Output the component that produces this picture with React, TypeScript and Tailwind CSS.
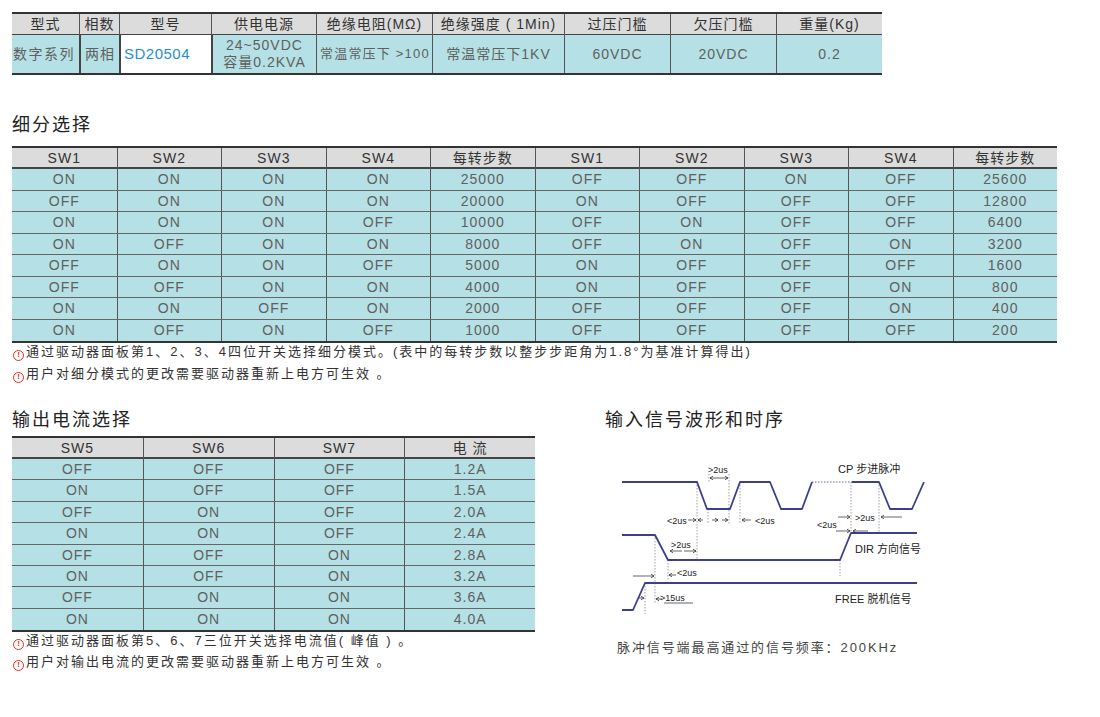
import React from 'react';

const font = { fontFamily: '"Liberation Sans", "Noto Sans CJK SC", sans-serif' };

const stepRows = [
  ['ON', 'ON', 'ON', 'ON', '25000', 'OFF', 'OFF', 'ON', 'OFF', '25600'],
  ['OFF', 'ON', 'ON', 'ON', '20000', 'ON', 'OFF', 'OFF', 'OFF', '12800'],
  ['ON', 'ON', 'ON', 'OFF', '10000', 'OFF', 'ON', 'OFF', 'OFF', '6400'],
  ['ON', 'OFF', 'ON', 'ON', '8000', 'OFF', 'ON', 'OFF', 'ON', '3200'],
  ['OFF', 'ON', 'ON', 'OFF', '5000', 'ON', 'OFF', 'OFF', 'OFF', '1600'],
  ['OFF', 'OFF', 'ON', 'ON', '4000', 'ON', 'OFF', 'OFF', 'ON', '800'],
  ['ON', 'ON', 'OFF', 'ON', '2000', 'OFF', 'OFF', 'OFF', 'ON', '400'],
  ['ON', 'OFF', 'ON', 'OFF', '1000', 'OFF', 'OFF', 'OFF', 'OFF', '200'],
];

const currentRows = [
  ['OFF', 'OFF', 'OFF', '1.2A'],
  ['ON', 'OFF', 'OFF', '1.5A'],
  ['OFF', 'ON', 'OFF', '2.0A'],
  ['ON', 'ON', 'OFF', '2.4A'],
  ['OFF', 'OFF', 'ON', '2.8A'],
  ['ON', 'OFF', 'ON', '3.2A'],
  ['OFF', 'ON', 'ON', '3.6A'],
  ['ON', 'ON', 'ON', '4.0A'],
];

const Warn = () => (
  <span className="inline-flex items-center justify-center w-[11px] h-[11px] rounded-full border border-[#e0301e] text-[#e0301e] text-[8px] font-bold leading-none mr-[2px] align-[-1px] tracking-normal">
    !
  </span>
);

const Note = ({ children }: { children: React.ReactNode }) => (
  <p className="text-[13px] text-[#333] tracking-[2px] pl-[1px]">
    <Warn />
    {children}
  </p>
);

const Title = ({ children }: { children: React.ReactNode }) => (
  <h2 className="text-[18px] leading-[24px] tracking-[2px] text-[#222]">{children}</h2>
);

const SwitchTable = ({
  grid,
  head,
  rows,
  rowH,
}: {
  grid: string;
  head: string[];
  rows: string[][];
  rowH: string;
}) => (
  <div className="border-t-2 border-b-2 border-[#333]">
    <div className={`grid ${grid} h-[21px] bg-[#dcdcdc] border-b-2 border-[#444]`}>
      {head.map((h, i) => (
        <div
          key={i}
          className={`flex items-center justify-center text-[14px] tracking-[1px] text-[#333] ${i > 0 ? 'border-l border-[#555]' : ''}`}
        >
          {h}
        </div>
      ))}
    </div>
    {rows.map((r, ri) => (
      <div
        key={ri}
        className={`grid ${grid} ${rowH} bg-[#b5e0e5] ${ri < rows.length - 1 ? 'border-b border-[#666]' : ''}`}
      >
        {r.map((c, i) => (
          <div
            key={i}
            className={`flex items-center justify-center text-[14px] tracking-[1px] text-[#606060] ${i > 0 ? 'border-l border-[#555]' : ''}`}
          >
            {c}
          </div>
        ))}
      </div>
    ))}
  </div>
);

const Arrow = ({ x1, x2, y }: { x1: number; x2: number; y: number }) => {
  const d = x2 > x1 ? -1 : 1;
  return (
    <g stroke="#222" strokeWidth="0.7" fill="none">
      <line x1={x1} y1={y} x2={x2} y2={y} />
      <path d={`M${x2 + d * 3},${y - 1.8} L${x2},${y} L${x2 + d * 3},${y + 1.8}`} />
    </g>
  );
};

const Timing = () => (
  <svg width="330" height="170" viewBox="600 450 330 170" className="block">
    {/* dotted guides */}
    <g stroke="#888" strokeWidth="0.8" strokeDasharray="1.5 1.5" fill="none">
      <line x1="697" y1="482" x2="697" y2="560" />
      <line x1="708" y1="509" x2="708" y2="524" />
      <line x1="709" y1="474" x2="709" y2="482" />
      <line x1="729" y1="474" x2="729" y2="524" />
      <line x1="740" y1="482" x2="740" y2="524" />
      <line x1="655" y1="535" x2="655" y2="604" />
      <line x1="668" y1="560" x2="668" y2="580" />
      <line x1="645" y1="583" x2="645" y2="614" />
      <line x1="840" y1="560" x2="840" y2="576" />
      <line x1="851" y1="482" x2="851" y2="533" />
      <line x1="879" y1="482" x2="879" y2="533" />
      <line x1="812" y1="482" x2="852" y2="482" stroke="#3b3f8c" />
    </g>
    {/* signals */}
    <g stroke="#3b3f8c" strokeWidth="1.8" fill="none" strokeLinejoin="round">
      <path d="M622,482 H697 L707,509 H730 L740,482 H770 L781,509 H802 L812,482" />
      <path d="M852,482 H879 L890,509 H912 L924,482" />
      <path d="M622,535 H655 L668,560 H840 L851,533 H917" />
      <path d="M622,610 H633 L645,583 H917" />
    </g>
    {/* labels */}
    <g fontFamily='"Liberation Sans", "Noto Sans CJK SC", sans-serif' fill="#222">
      <text x="838" y="473" fontSize="11">CP 步进脉冲</text>
      <text x="855" y="553" fontSize="11">DIR 方向信号</text>
      <text x="835" y="603" fontSize="11">FREE 脱机信号</text>
      <g fontSize="9">
        <text x="708" y="473">&gt;2us</text>
        <text x="667" y="524">&lt;2us</text>
        <text x="755" y="524">&lt;2us</text>
        <text x="855" y="521">&gt;2us</text>
        <text x="817" y="528">&lt;2us</text>
        <text x="671" y="548">&gt;2us</text>
        <text x="677" y="576">&lt;2us</text>
        <text x="660" y="601">&gt;15us</text>
      </g>
    </g>
    <Arrow x1={719} x2={710} y={478} />
    <Arrow x1={719} x2={728} y={478} />
    <Arrow x1={688} x2={696} y={520} />
    <Arrow x1={703} x2={698} y={520} />
    <Arrow x1={712} x2={718} y={520} />
    <Arrow x1={722} x2={728} y={520} />
    <Arrow x1={751} x2={742} y={520} />
    <Arrow x1={838} x2={850} y={517} />
    <Arrow x1={902} x2={881} y={517} />
    <Arrow x1={836} x2={850} y={531} />
    <Arrow x1={868} x2={853} y={531} />
    <Arrow x1={682} x2={670} y={551} />
    <Arrow x1={684} x2={696} y={551} />
    <Arrow x1={676} x2={669} y={575} />
    <Arrow x1={633} x2={654} y={576} />
    <Arrow x1={639} x2={644} y={598} />
    <Arrow x1={662} x2={656} y={599} />
    <line x1="664" y1="603" x2="693" y2="603" stroke="#222" strokeWidth="0.7" />
  </svg>
);

export default function App() {
  return (
    <div className="min-h-screen w-[1100px] bg-white pl-[12px] pt-[12px]" style={font}>
      {/* product spec */}
      <div className="w-[870px] border-t-2 border-b-2 border-[#333]">
        <div className="grid grid-cols-[67px_40px_92px_105px_116px_132px_106px_106px_106px] h-[21px] bg-[#dcdcdc] border-b border-[#444] text-[14px] tracking-[1px] text-[#333]">
          <div className="flex items-center justify-center">型式</div>
          <div className="flex items-center justify-center border-l border-[#555]">相数</div>
          <div className="flex items-center justify-center border-l border-[#555]">型号</div>
          <div className="flex items-center justify-center border-l border-[#555]">供电电源</div>
          <div className="flex items-center justify-center border-l border-[#555]">绝缘电阻(MΩ)</div>
          <div className="flex items-center justify-center border-l border-[#555]">绝缘强度 ( 1Min)</div>
          <div className="flex items-center justify-center border-l border-[#555]">过压门槛</div>
          <div className="flex items-center justify-center border-l border-[#555]">欠压门槛</div>
          <div className="flex items-center justify-center border-l border-[#555]">重量(Kg)</div>
        </div>
        <div className="grid grid-cols-[67px_40px_92px_105px_116px_132px_106px_106px_106px] h-[38px] bg-[#b5e0e5] text-[14px] tracking-[1px] text-[#606060]">
          <div className="flex items-center pl-[1px] tracking-[1.5px]">数字系列</div>
          <div className="flex items-center justify-center border-l-2 border-[#444]">两相</div>
          <div className="flex items-center pl-[3px] bg-white border-l-2 border-[#444] text-[15px] tracking-[0.5px] text-[#1e8fd6]">
            SD20504
          </div>
          <div className="flex flex-col items-center justify-center border-l-2 border-[#444] leading-[17px]">
            <span>24~50VDC</span>
            <span>容量0.2KVA</span>
          </div>
          <div className="flex items-center pl-[3px] border-l border-[#555] text-[13px] tracking-[1.2px]">常温常压下 &gt;100</div>
          <div className="flex items-center justify-center border-l border-[#555]">常温常压下1KV</div>
          <div className="flex items-center justify-center border-l border-[#555]">60VDC</div>
          <div className="flex items-center justify-center border-l border-[#555]">20VDC</div>
          <div className="flex items-center justify-center border-l border-[#555]">0.2</div>
        </div>
      </div>

      {/* microstep */}
      <div className="mt-[38px] mb-[9px]">
        <Title>细分选择</Title>
      </div>
      <div className="w-[1045px]">
        <SwitchTable
          grid="grid-cols-[repeat(10,104.5px)]"
          head={['SW1', 'SW2', 'SW3', 'SW4', '每转步数', 'SW1', 'SW2', 'SW3', 'SW4', '每转步数']}
          rows={stepRows}
          rowH="h-[21.5px]"
        />
      </div>
      <div className="leading-[22px] mt-[-2px]">
        <Note>通过驱动器面板第1、2、3、4四位开关选择细分模式。(表中的每转步数以整步步距角为1.8°为基准计算得出)</Note>
        <Note>用户对细分模式的更改需要驱动器重新上电方可生效 。</Note>
      </div>

      <div className="flex mt-[23px]">
        {/* output current */}
        <div className="w-[588px]">
          <div className="mb-[4px]">
            <Title>输出电流选择</Title>
          </div>
          <div className="w-[523px]">
            <SwitchTable
              grid="grid-cols-[repeat(4,130.75px)]"
              head={['SW5', 'SW6', 'SW7', '电 流']}
              rows={currentRows}
              rowH="h-[21.4px]"
            />
          </div>
          <div className="leading-[21px] mt-[-2px]">
            <Note>通过驱动器面板第5、6、7三位开关选择电流值( 峰值 ) 。</Note>
            <Note>用户对输出电流的更改需要驱动器重新上电方可生效 。</Note>
          </div>
        </div>

        {/* timing */}
        <div className="flex-1">
          <div className="pl-[5px]">
            <Title>输入信号波形和时序</Title>
          </div>
          <div className="mt-[18px]">
            <Timing />
          </div>
          <p className="mt-[18px] pl-[17px] text-[13px] leading-[20px] tracking-[1.9px] text-[#444]">
            脉冲信号端最高通过的信号频率：200KHz
          </p>
        </div>
      </div>
    </div>
  );
}
